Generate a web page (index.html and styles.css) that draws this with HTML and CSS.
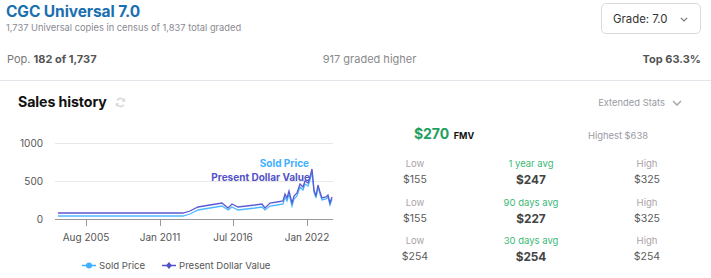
FILE: index.html
```html
<!DOCTYPE html>
<html>
<head>
<meta charset="utf-8">
<link rel="stylesheet" href="styles.css">
</head>
<body>
<div class="page">
  <header class="header">
    <div class="titles">
      <h1 class="title">CGC Universal 7.0</h1>
      <div class="subtitle">1,737 Universal copies in census of 1,837 total graded</div>
    </div>
    <button class="grade-select">
      <span>Grade: 7.0</span>
      <svg class="chev" width="8" height="5" viewBox="0 0 8 5"><path d="M0.8 0.8l3.2 3.2 3.2-3.2" fill="none" stroke="#777" stroke-width="1.2"/></svg>
    </button>
  </header>
  <div class="pop-row">
    <div class="pop">Pop. <b>182 of 1,737</b></div>
    <div class="higher">917 graded higher</div>
    <div class="top"><b>Top 63.3%</b></div>
  </div>
  <section class="sales">
    <div class="left">
      <div class="sales-head">
        <h2 class="sales-title">Sales history</h2>
        <svg class="refresh" width="11" height="11" viewBox="0 0 12 12">
          <path d="M10.2 4.5A4.4 4.4 0 0 0 2.3 3.6" fill="none" stroke="#d6d8dc" stroke-width="1.7"/>
          <path d="M1.8 7.5A4.4 4.4 0 0 0 9.7 8.4" fill="none" stroke="#d6d8dc" stroke-width="1.7"/>
          <path d="M11.2 1.2v4H7.2z" fill="#d6d8dc"/>
          <path d="M0.8 10.8v-4h4z" fill="#d6d8dc"/>
        </svg>
      </div>
      <svg class="chart" width="345" height="150" viewBox="0 128 345 150">
        <g font-family="Inter, 'Noto Sans', sans-serif" font-size="10" fill="#555">
          <text x="43" y="146.5" text-anchor="end">1000</text>
          <text x="43" y="184.5" text-anchor="end">500</text>
          <text x="43" y="222.5" text-anchor="end">0</text>
        </g>
        <line x1="55" y1="143.5" x2="333" y2="143.5" stroke="#e8e8e8"/>
        <line x1="55" y1="181.5" x2="333" y2="181.5" stroke="#e8e8e8"/>
        <polyline fill="none" stroke="#4db8ff" stroke-width="1.3" points="58,216 183,216 190,214 198,210 210,208 222,206 228,210 232,207 238,210 255,208 262,207 265,210 270,206 277,205 283,204 285,197 287,201 289,194 292,206 294,199 297,196 300,187 303,190 305,184 308,186 310,180 312,172 314,192 316,198 318,187 320,194 322,200 326,199 328,197 330,205 332,199"/>
        <polyline fill="none" stroke="#5a5ad2" stroke-width="1.3" points="58,213 183,213 190,211 198,207 210,205 222,203 228,208 232,204 238,207 255,205 262,204 265,208 270,203 277,202 283,201 285,194 287,198 289,191 292,203 294,196 297,193 300,184 303,187 305,181 308,183 310,177 312,169 314,190 316,196 318,185 320,192 322,198 326,197 328,195 330,203 332,197"/>
        <line x1="55" y1="219.5" x2="333" y2="219.5" stroke="#999" stroke-width="1"/>
        <g stroke="#999">
          <line x1="86.5" y1="220" x2="86.5" y2="226"/>
          <line x1="160.5" y1="220" x2="160.5" y2="226"/>
          <line x1="233.5" y1="220" x2="233.5" y2="226"/>
          <line x1="307.5" y1="220" x2="307.5" y2="226"/>
        </g>
        <g font-family="Inter, 'Noto Sans', sans-serif" font-size="10" fill="#555" text-anchor="middle">
          <text x="86" y="241">Aug 2005</text>
          <text x="160" y="241">Jan 2011</text>
          <text x="233" y="241">Jul 2016</text>
          <text x="307" y="241">Jan 2022</text>
        </g>
        <g font-family="Inter, 'Noto Sans', sans-serif" font-size="10" font-weight="700" text-anchor="end">
          <text x="309" y="166.5" fill="#3fb0ff">Sold Price</text>
          <text x="310" y="180.5" fill="#5252c8">Present Dollar Value</text>
        </g>
        <g font-family="Inter, 'Noto Sans', sans-serif" font-size="9.6" fill="#555">
          <line x1="82" y1="265.5" x2="96" y2="265.5" stroke="#3fb0ff" stroke-width="1.5"/>
          <circle cx="89" cy="265.5" r="3" fill="#3fb0ff"/>
          <text x="99" y="269">Sold Price</text>
          <line x1="162" y1="265.5" x2="176" y2="265.5" stroke="#5252c8" stroke-width="1.5"/>
          <path d="M169 262l3 3.5-3 3.5-3-3.5z" fill="#5252c8"/>
          <text x="179" y="269">Present Dollar Value</text>
        </g>
      </svg>
    </div>
    <div class="right">
      <div class="ext">Extended Stats
        <svg width="10" height="6" viewBox="0 0 10 6"><path d="M1 1l4 4 4-4" fill="none" stroke="#aaa" stroke-width="1.6"/></svg>
      </div>
      <div class="fmv-row">
        <div class="fmv"><span class="fmv-val">$270</span> <span class="fmv-lbl">FMV</span></div>
        <div class="highest">Highest $638</div>
      </div>
      <div class="stats">
        <div class="cell"><div class="lbl">Low</div><div class="val">$155</div></div>
        <div class="cell"><div class="lbl avg">1 year avg</div><div class="val big">$247</div></div>
        <div class="cell"><div class="lbl">High</div><div class="val">$325</div></div>
        <div class="cell"><div class="lbl">Low</div><div class="val">$155</div></div>
        <div class="cell"><div class="lbl avg">90 days avg</div><div class="val big">$227</div></div>
        <div class="cell"><div class="lbl">High</div><div class="val">$325</div></div>
        <div class="cell"><div class="lbl">Low</div><div class="val">$254</div></div>
        <div class="cell"><div class="lbl avg">30 days avg</div><div class="val big">$254</div></div>
        <div class="cell"><div class="lbl">High</div><div class="val">$254</div></div>
      </div>
    </div>
  </section>
</div>
</body>
</html>
```

FILE: styles.css
```css
* { box-sizing: border-box; }
html, body { margin: 0; padding: 0; background: #fff; }
body { font-family: Inter, "Noto Sans", "Liberation Sans", sans-serif; color: #333; width: 711px; height: 278px; overflow: hidden; }
.page { width: 711px; }
.header { display: flex; justify-content: space-between; align-items: flex-start; padding: 2px 10px 0 6px; height: 34px; }
.title { margin: 0; font-size: 15.5px; font-weight: 700; color: #1a6fb0; line-height: 20px; letter-spacing: -0.1px; }
.subtitle { font-size: 9.3px; color: #8a8a93; line-height: 12px; }
.grade-select { width: 100px; height: 31px; margin-top: 1px; border: 1px solid #d9d9de; border-radius: 5px; background: #fff; display: flex; align-items: center; justify-content: space-between; padding: 0 12px 0 11px; font-family: inherit; font-size: 11.4px; color: #333; }
.chev { margin-top: 1px; }
.pop-row { display: flex; justify-content: space-between; padding: 17px 10px 0 7px; font-size: 11px; line-height: 16px; height: 47px; border-bottom: 1px solid #e4e4ea; color: #777; }
.pop b, .top b { color: #555; font-weight: 700; }
.higher { color: #8a8a8a; }
.sales { display: flex; }
.left { width: 357px; }
.sales-head { display: flex; align-items: center; padding: 12px 0 0 18px; height: 30px; }
.sales-title { margin: 0; font-size: 14.2px; font-weight: 700; color: #111; letter-spacing: -0.1px; line-height: 18px; }
.refresh { margin-left: 8px; }
.chart { display: block; margin-top: 17px; }
.right { width: 348px; }
.ext { display: flex; justify-content: flex-end; align-items: center; gap: 7px; padding: 16px 23px 0 0; font-size: 9.4px; color: #9a9aa3; line-height: 12px; }
.fmv-row { display: grid; grid-template-columns: 1fr 1fr; margin-top: 15px; align-items: baseline; line-height: 18px; }
.fmv { text-align: center; }
.fmv-val { font-size: 14px; font-weight: 700; color: #1fa060; }
.fmv-lbl { font-size: 9px; font-weight: 700; color: #111; }
.highest { text-align: center; font-size: 9.4px; color: #9a9aa3; }
.stats { display: grid; grid-template-columns: repeat(3, 1fr); row-gap: 6.5px; margin-top: 12px; text-align: center; }
.lbl { font-size: 9.5px; color: #aaa3a8; line-height: 14px; }
.lbl.avg { color: #3cb878; }
.val { font-size: 10.5px; color: #5a5a5a; line-height: 18px; }
.val.big { font-size: 11.8px; font-weight: 700; color: #444; }
```
